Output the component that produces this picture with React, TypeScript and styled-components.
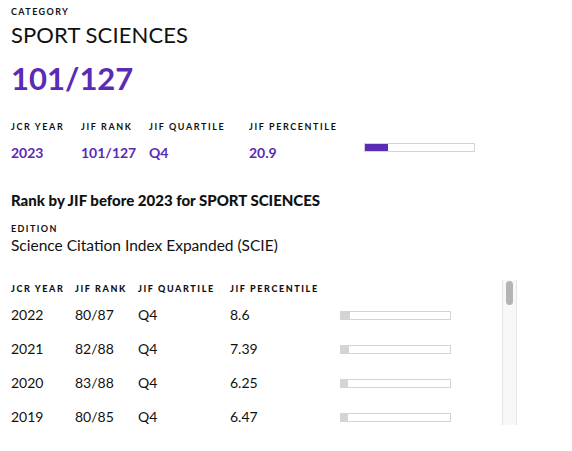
import React from "react";
import styled, { createGlobalStyle } from "styled-components";

const Global = createGlobalStyle`
  html, body { margin: 0; padding: 0; background: #fff; }
  body { font-family: Lato, "Noto Sans", sans-serif; color: #111; }
  * { box-sizing: border-box; }
`;

const PURPLE = "#5a2bb5";

const Page = styled.div`
  width: 572px;
  height: 451px;
  overflow: hidden;
  padding: 6px 0 0 11px;
`;

const Label = styled.div<{ $mt?: number }>`
  font-size: 9px;
  font-weight: 700;
  letter-spacing: 1.4px;
  text-transform: uppercase;
  line-height: 12px;
  margin-top: ${(p) => p.$mt ?? 0}px;
`;

const Title = styled.div`
  font-size: 22px;
  line-height: 30px;
  margin-top: 2px;
  letter-spacing: 0.1px;
`;

const BigNumber = styled.div`
  font-size: 31px;
  font-weight: 700;
  color: ${PURPLE};
  line-height: 40px;
  margin-top: 8px;
`;

const MetricGrid = styled.div`
  display: grid;
  grid-template-columns: 70px 68px 100px 115px 111px;
  margin-top: 23px;
`;

const MetricHead = styled.div`
  font-size: 9px;
  font-weight: 700;
  letter-spacing: 1.6px;
  line-height: 12px;
  white-space: nowrap;
`;

const MetricValue = styled.div`
  font-size: 14px;
  font-weight: 700;
  color: ${PURPLE};
  line-height: 18px;
  margin-top: 11px;
`;

const Bar = styled.div`
  height: 9px;
  border: 1.5px solid #d4d4d4;
  background: #fff;
  margin-top: 10px;
  display: flex;
`;

const Fill = styled.div<{ $color: string }>`
  background: ${(p) => p.$color};
  height: 100%;
`;

const Heading = styled.div`
  font-size: 15px;
  font-weight: 900;
  line-height: 20px;
  margin-top: 28px;
`;

const EditionValue = styled.div`
  font-size: 15.5px;
  line-height: 20px;
  margin-top: 0px;
`;

const Scroller = styled.div`
  display: flex;
  margin-top: 25px;
  margin-left: -11px;
  width: 517px;
  height: 145px;
`;

const Viewport = styled.div`
  flex: 1;
  height: 100%;
  overflow: hidden;
  padding-left: 11px;
`;

const Track = styled.div`
  width: 15px;
  height: 100%;
  background: #f8f8f8;
  border-left: 1px solid #e6e6e6;
  border-right: 1px solid #e6e6e6;
  padding: 1px 3px 0 3px;
`;

const Thumb = styled.div`
  height: 24px;
  border-radius: 4px;
  background: #b4b4b4;
`;

const Table = styled.div`
  display: grid;
  grid-template-columns: 64px 63px 92px 110px 111px;
  grid-template-rows: 18px;
  grid-auto-rows: 34px;
  align-items: center;
`;

const TableHead = styled.div`
  font-size: 9px;
  font-weight: 900;
  letter-spacing: 1.6px;
  white-space: nowrap;
  line-height: 12px;
  align-self: end;
  margin-bottom: 3px;
`;

const Cell = styled.div`
  font-size: 14px;
  line-height: 18px;
`;

const RowBar = styled.div`
  height: 9px;
  border: 1.5px solid #d4d4d4;
  display: flex;
`;

const rows: [string, string, string, number][] = [
  ["2022", "80/87", "Q4", 8.6],
  ["2021", "82/88", "Q4", 7.39],
  ["2020", "83/88", "Q4", 6.25],
  ["2019", "80/85", "Q4", 6.47],
];

export default function App() {
  return (
    <Page>
      <Global />
      <Label>Category</Label>
      <Title>SPORT SCIENCES</Title>
      <BigNumber>101/127</BigNumber>
      <MetricGrid>
        <MetricHead>JCR YEAR</MetricHead>
        <MetricHead>JIF RANK</MetricHead>
        <MetricHead>JIF QUARTILE</MetricHead>
        <MetricHead>JIF PERCENTILE</MetricHead>
        <div />
        <MetricValue>2023</MetricValue>
        <MetricValue>101/127</MetricValue>
        <MetricValue>Q4</MetricValue>
        <MetricValue>20.9</MetricValue>
        <Bar>
          <Fill $color={PURPLE} style={{ width: "20.9%" }} />
        </Bar>
      </MetricGrid>
      <Heading>Rank by JIF before 2023 for SPORT SCIENCES</Heading>
      <Label $mt={13}>Edition</Label>
      <EditionValue>Science Citation Index Expanded (SCIE)</EditionValue>
      <Scroller>
        <Viewport>
          <Table>
            <TableHead>JCR YEAR</TableHead>
            <TableHead>JIF RANK</TableHead>
            <TableHead>JIF QUARTILE</TableHead>
            <TableHead>JIF PERCENTILE</TableHead>
            <div />
            {rows.map(([y, r, q, p]) => (
              <React.Fragment key={y}>
                <Cell>{y}</Cell>
                <Cell>{r}</Cell>
                <Cell>{q}</Cell>
                <Cell>{p}</Cell>
                <RowBar>
                  <Fill $color="#d4d4d4" style={{ width: `${p}%` }} />
                </RowBar>
              </React.Fragment>
            ))}
          </Table>
        </Viewport>
        <Track>
          <Thumb />
        </Track>
      </Scroller>
    </Page>
  );
}
